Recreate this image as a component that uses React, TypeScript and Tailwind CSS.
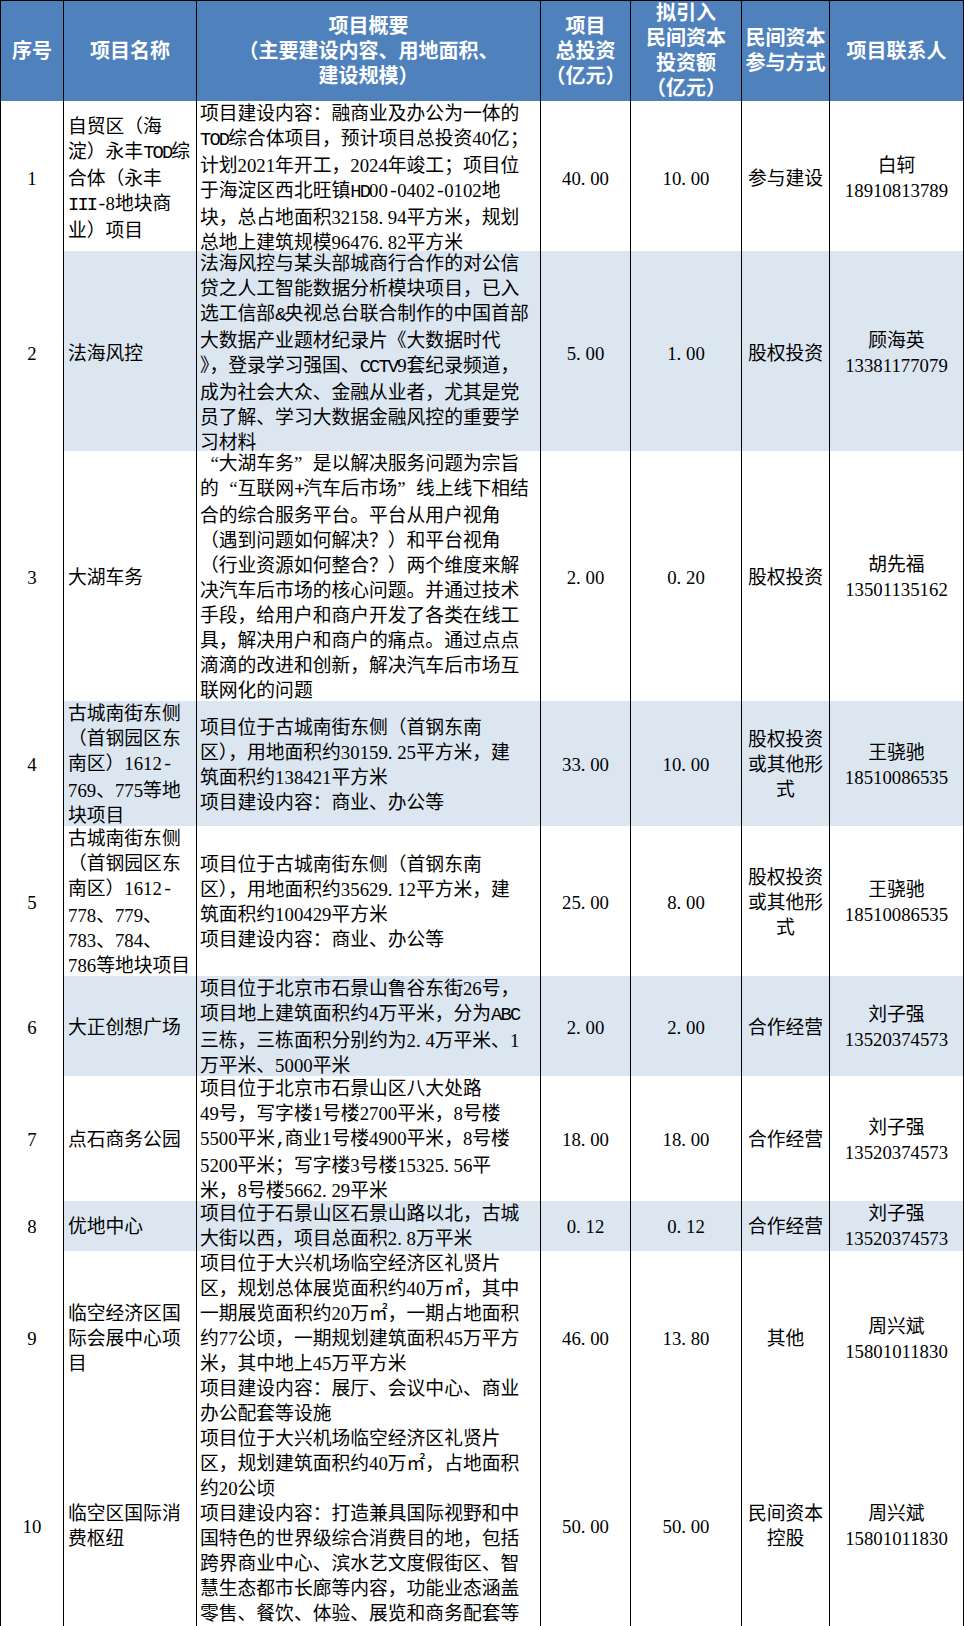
import React from "react";

type Row = {
  no: string;
  name: string[];
  desc: string[];
  total: string;
  privateAmt: string;
  method: string[];
  contact: string;
  phone: string;
  height: string;
  shaded?: boolean;
};

const COLS =
  "grid grid-cols-[63px_133px_344px_90px_111px_88px_134px]";

const ROWS: Row[] = [
  {
    no: "1",
    name: ["自贸区（海", "淀）永丰TOD综", "合体（永丰", "III-8地块商", "业）项目"],
    desc: [
      "项目建设内容：融商业及办公为一体的",
      "TOD综合体项目，预计项目总投资40亿；",
      "计划2021年开工，2024年竣工；项目位",
      "于海淀区西北旺镇HD00-0402-0102地",
      "块，总占地面积32158.94平方米，规划",
      "总地上建筑规模96476.82平方米",
    ],
    total: "40.00",
    privateAmt: "10.00",
    method: ["参与建设"],
    contact: "白轲",
    phone: "18910813789",
    height: "h-[150px]",
  },
  {
    no: "2",
    name: ["法海风控"],
    desc: [
      "法海风控与某头部城商行合作的对公信",
      "贷之人工智能数据分析模块项目，已入",
      "选工信部&央视总台联合制作的中国首部",
      "大数据产业题材纪录片《大数据时代",
      "》，登录学习强国、CCTV9套纪录频道，",
      "成为社会大众、金融从业者，尤其是党",
      "员了解、学习大数据金融风控的重要学",
      "习材料",
    ],
    total: "5.00",
    privateAmt: "1.00",
    method: ["股权投资"],
    contact: "顾海英",
    phone: "13381177079",
    height: "h-[200px]",
    shaded: true,
  },
  {
    no: "3",
    name: ["大湖车务"],
    desc: [
      "“大湖车务”是以解决服务问题为宗旨",
      "的“互联网+汽车后市场”线上线下相结",
      "合的综合服务平台。平台从用户视角",
      "（遇到问题如何解决？）和平台视角",
      "（行业资源如何整合？）两个维度来解",
      "决汽车后市场的核心问题。并通过技术",
      "手段，给用户和商户开发了各类在线工",
      "具，解决用户和商户的痛点。通过点点",
      "滴滴的改进和创新，解决汽车后市场互",
      "联网化的问题",
    ],
    total: "2.00",
    privateAmt: "0.20",
    method: ["股权投资"],
    contact: "胡先福",
    phone: "13501135162",
    height: "h-[250px]",
  },
  {
    no: "4",
    name: ["古城南街东侧", "（首钢园区东", "南区）1612-", "769、775等地", "块项目"],
    desc: [
      "项目位于古城南街东侧（首钢东南",
      "区），用地面积约30159.25平方米，建",
      "筑面积约138421平方米",
      "项目建设内容：商业、办公等",
    ],
    total: "33.00",
    privateAmt: "10.00",
    method: ["股权投资", "或其他形", "式"],
    contact: "王骁驰",
    phone: "18510086535",
    height: "h-[125px]",
    shaded: true,
  },
  {
    no: "5",
    name: [
      "古城南街东侧",
      "（首钢园区东",
      "南区）1612-",
      "778、779、",
      "783、784、",
      "786等地块项目",
    ],
    desc: [
      "项目位于古城南街东侧（首钢东南",
      "区），用地面积约35629.12平方米，建",
      "筑面积约100429平方米",
      "项目建设内容：商业、办公等",
    ],
    total: "25.00",
    privateAmt: "8.00",
    method: ["股权投资", "或其他形", "式"],
    contact: "王骁驰",
    phone: "18510086535",
    height: "h-[150px]",
  },
  {
    no: "6",
    name: ["大正创想广场"],
    desc: [
      "项目位于北京市石景山鲁谷东街26号，",
      "项目地上建筑面积约4万平米，分为ABC",
      "三栋，三栋面积分别约为2.4万平米、1",
      "万平米、5000平米",
    ],
    total: "2.00",
    privateAmt: "2.00",
    method: ["合作经营"],
    contact: "刘子强",
    phone: "13520374573",
    height: "h-[100px]",
    shaded: true,
  },
  {
    no: "7",
    name: ["点石商务公园"],
    desc: [
      "项目位于北京市石景山区八大处路",
      "49号，写字楼1号楼2700平米，8号楼",
      "5500平米,商业1号楼4900平米，8号楼",
      "5200平米；写字楼3号楼15325.56平",
      "米，8号楼5662.29平米",
    ],
    total: "18.00",
    privateAmt: "18.00",
    method: ["合作经营"],
    contact: "刘子强",
    phone: "13520374573",
    height: "h-[125px]",
  },
  {
    no: "8",
    name: ["优地中心"],
    desc: ["项目位于石景山区石景山路以北，古城", "大街以西，项目总面积2.8万平米"],
    total: "0.12",
    privateAmt: "0.12",
    method: ["合作经营"],
    contact: "刘子强",
    phone: "13520374573",
    height: "h-[50px]",
    shaded: true,
  },
  {
    no: "9",
    name: ["临空经济区国", "际会展中心项", "目"],
    desc: [
      "项目位于大兴机场临空经济区礼贤片",
      "区，规划总体展览面积约40万㎡，其中",
      "一期展览面积约20万㎡，一期占地面积",
      "约77公顷，一期规划建筑面积45万平方",
      "米，其中地上45万平方米",
      "项目建设内容：展厅、会议中心、商业",
      "办公配套等设施",
    ],
    total: "46.00",
    privateAmt: "13.80",
    method: ["其他"],
    contact: "周兴斌",
    phone: "15801011830",
    height: "h-[175px]",
  },
  {
    no: "10",
    name: ["临空区国际消", "费枢纽"],
    desc: [
      "项目位于大兴机场临空经济区礼贤片",
      "区，规划建筑面积约40万㎡，占地面积",
      "约20公顷",
      "项目建设内容：打造兼具国际视野和中",
      "国特色的世界级综合消费目的地，包括",
      "跨界商业中心、滨水艺文度假街区、智",
      "慧生态都市长廊等内容，功能业态涵盖",
      "零售、餐饮、体验、展览和商务配套等",
    ],
    total: "50.00",
    privateAmt: "50.00",
    method: ["民间资本", "控股"],
    contact: "周兴斌",
    phone: "15801011830",
    height: "h-[200px]",
  },
];

const HEADERS: string[][] = [
  ["序号"],
  ["项目名称"],
  ["项目概要", "（主要建设内容、用地面积、", "建设规模）"],
  ["项目", "总投资", "（亿元）"],
  ["拟引入", "民间资本", "投资额", "（亿元）"],
  ["民间资本", "参与方式"],
  ["项目联系人"],
];

// SimSun-ish spacing: half-width latin, wide period, full-width curly quotes
const Text = ({ s }: { s: string }) => {
  const parts = s.split(/([A-Za-z&+,\-]+|\.|“|”)/).filter(Boolean);
  return (
    <>
      {parts.map((p, i) => {
        if (p === ".")
          return (
            <span key={i} className="inline-block w-[0.5em] text-left">
              .
            </span>
          );
        if (p === "“")
          return (
            <span key={i} className="inline-block w-[1em] text-right">
              “
            </span>
          );
        if (p === "”")
          return (
            <span key={i} className="inline-block w-[1em] text-left">
              ”
            </span>
          );
        if (/^[A-Za-z&+,\-]+$/.test(p))
          return (
            <span
              key={i}
              className="tracking-[-0.1em]"
              style={{ fontFamily: '"Liberation Mono", monospace' }}
            >
              {p}
            </span>
          );
        return <React.Fragment key={i}>{p}</React.Fragment>;
      })}
    </>
  );
};

const Lines = ({ lines }: { lines: string[] }) => (
  <div>
    {lines.map((l, i) => (
      <div key={i} className="whitespace-nowrap">
        <Text s={l} />
      </div>
    ))}
  </div>
);

const cell = "border-r border-b border-black flex items-center overflow-visible";

const App = () => {
  return (
    <div
      className="w-[964px] bg-white text-black text-[18.8px] leading-[25px] border-l border-t border-black"
      style={{ fontFamily: '"Liberation Serif", "Noto Sans CJK SC", serif' }}
    >
      {/* header */}
      <div className={`${COLS} h-[100px] bg-[#4f81bd] text-white font-bold text-[20px]`}>
        {HEADERS.map((h, i) => (
          <div key={i} className={`${cell} justify-center text-center`}>
            <Lines lines={h} />
          </div>
        ))}
      </div>

      {ROWS.map((r) => {
        const bg = r.shaded ? "bg-[#dce6f1]" : "bg-white";
        return (
          <div key={r.no} className={`${COLS} ${r.height}`}>
            <div className={`${cell} justify-center bg-white`}>{r.no}</div>
            <div className={`${cell} ${bg} pl-[4px]`}>
              <Lines lines={r.name} />
            </div>
            <div className={`${cell} ${bg} pl-[3px]`}>
              <Lines lines={r.desc} />
            </div>
            <div className={`${cell} ${bg} justify-center`}>
              <Text s={r.total} />
            </div>
            <div className={`${cell} ${bg} justify-center`}>
              <Text s={r.privateAmt} />
            </div>
            <div className={`${cell} ${bg} justify-center text-center`}>
              <Lines lines={r.method} />
            </div>
            <div className={`${cell} ${bg} justify-center text-center`}>
              <Lines lines={[r.contact, r.phone]} />
            </div>
          </div>
        );
      })}
    </div>
  );
};

export default App;
